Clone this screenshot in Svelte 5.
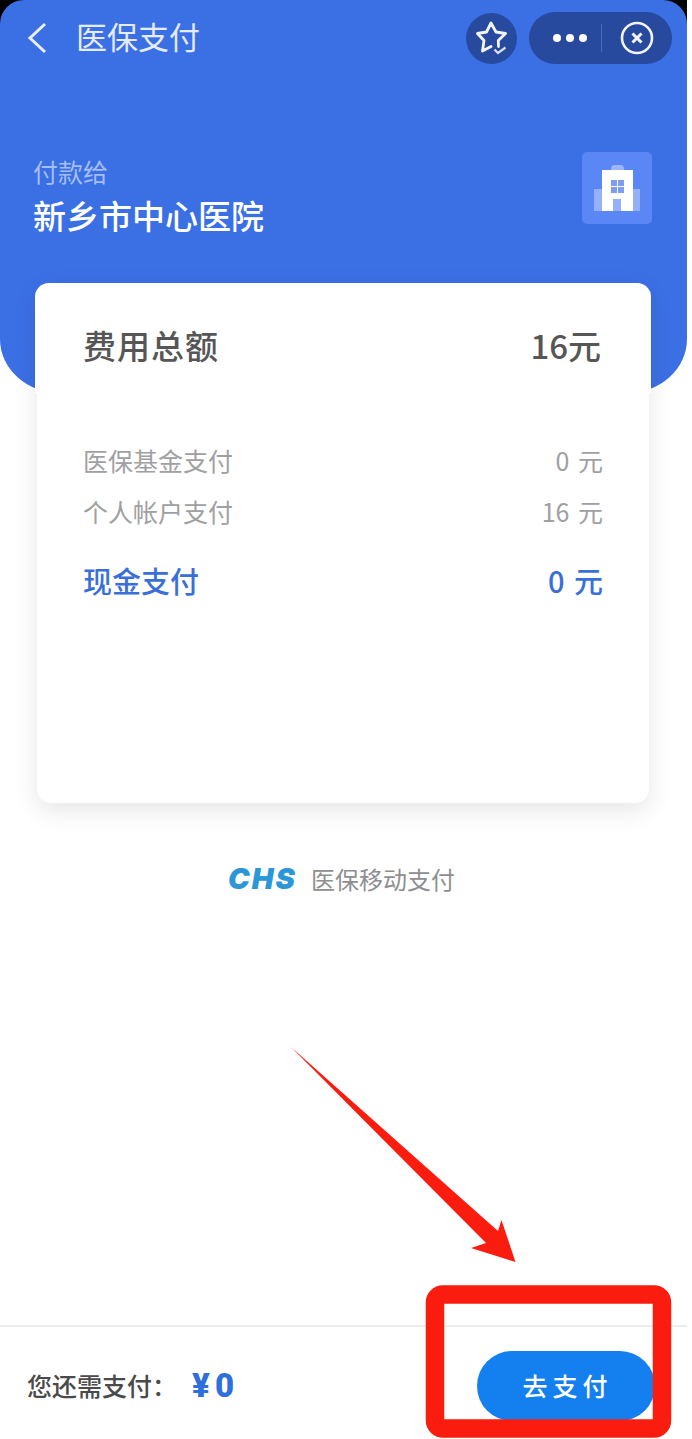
<script>
    // 费用明细
    const details = [
        { label: '医保基金支付', value: '0 元' },
        { label: '个人帐户支付', value: '16 元' }
    ];
</script>

<div class="page">
    <div class="top">
        <header class="header">
            <div class="nav">
                <svg class="back" width="20" height="32" viewBox="0 0 20 32">
                    <path d="M18 2 L3 16 L18 30" fill="none" stroke="#e8eefc" stroke-width="3" />
                </svg>
                <span class="title">医保支付</span>
                <span class="star-btn">
                    <svg width="32" height="34" viewBox="0 0 32 34">
                        <path d="M22.5 25.5 L22.3 19.5 L29.5 12.5 L20 11 L15 2 L10.5 11 L1.5 12.5 L8 19.5 L6.5 30 L15 25.5" fill="none" stroke="#f2f5fd" stroke-width="2.8" stroke-linejoin="round" stroke-linecap="round" />
                        <path d="M18.5 28.5 L22 32 L29.5 26.5" fill="none" stroke="#d5dff6" stroke-width="2.2" />
                    </svg>
                </span>
                <div class="capsule">
                    <span class="dots"><i></i><i></i><i></i></span>
                    <span class="divider"></span>
                    <svg width="34" height="34" viewBox="0 0 34 34">
                        <circle cx="17" cy="17" r="15" fill="none" stroke="#f2f5fd" stroke-width="2.6" />
                        <path d="M12.5 12.5 L21.5 21.5 M21.5 12.5 L12.5 21.5" stroke="#f2f5fd" stroke-width="3" />
                    </svg>
                </div>
            </div>
            <div class="payee">
                <div class="payee-text">
                    <div class="payee-label">付款给</div>
                    <div class="payee-name">新乡市中心医院</div>
                </div>
                <span class="tile">
                    <svg width="46" height="46" viewBox="0 0 46 46">
                        <rect x="0" y="24" width="46" height="22" fill="#fff" opacity="0.35" />
                        <rect x="17" y="0" width="13" height="10" rx="4" fill="#fff" opacity="0.4" />
                        <path d="M8 5 H39 V46 H27 V34 H19 V46 H8 Z" fill="#fff" />
                        <g fill="#7d9df0">
                            <rect x="17" y="15" width="6" height="6" />
                            <rect x="24" y="15" width="6" height="6" />
                            <rect x="17" y="22" width="6" height="6" />
                            <rect x="24" y="22" width="6" height="6" />
                        </g>
                    </svg>
                </span>
            </div>
        </header>
    </div>

    <section class="card">
        <div class="row total">
            <span>费用总额</span>
            <span class="total-value">16元</span>
        </div>
        <div class="details">
            {#each details as item}
                <div class="row detail">
                    <span>{item.label}</span>
                    <span class="spaced">{item.value}</span>
                </div>
            {/each}
        </div>
        <div class="row cash">
            <span>现金支付</span>
            <span class="spaced">0 元</span>
        </div>
    </section>

    <div class="brand">
        <span class="chs">CHS</span>
        <span class="brand-text">医保移动支付</span>
    </div>

    <footer class="footer">
        <span class="due">您还需支付：</span>
        <span class="amount"><span class="yen">¥</span>0</span>
        <button class="pay">去支付</button>
    </footer>

    <!-- 红色标注 -->
    <svg class="markup" width="692" height="1439" viewBox="0 0 692 1439">
        <polygon points="291,1047 498,1231 501.5,1220 515.5,1262 471,1248 486,1243" fill="#fb1c10" />
        <rect x="435" y="1294.5" width="227" height="134" rx="8" fill="none" stroke="#fb1c10" stroke-width="18.5" />
    </svg>
</div>

<style>
    :global(body) {
        background: #fff;
    }
    .page {
        position: relative;
        width: 687px;
        height: 1439px;
        display: flex;
        flex-direction: column;
        font-family: "Noto Sans CJK SC", "Noto Sans", sans-serif;
    }
    .top {
        background: linear-gradient(#000 30px, transparent 30px);
    }
    .header {
        height: 393px;
        box-sizing: border-box;
        padding-top: 12px;
        background: #3b6fe4;
        border-radius: 24px 24px 60px 60px / 24px 24px 54px 54px;
        color: #fff;
    }
    .nav {
        display: flex;
        align-items: center;
        height: 52px;
        padding-left: 27px;
    }
    .back {
        margin-right: 29px;
    }
    .title {
        padding-bottom: 5px;
        font-size: 31px;
        line-height: 47px;
        color: #e4ebfa;
    }
    .star-btn {
        display: flex;
        align-items: center;
        justify-content: center;
        width: 51px;
        height: 51px;
        margin-left: auto;
        border-radius: 50%;
        background: #274a9f;
    }
    .capsule {
        display: flex;
        align-items: center;
        width: 143px;
        height: 52px;
        box-sizing: border-box;
        margin: 0 15px 0 12px;
        padding-left: 24px;
        border-radius: 26px;
        background: #274a9f;
    }
    .dots {
        display: flex;
        gap: 5px;
    }
    .dots i {
        width: 8px;
        height: 8px;
        border-radius: 50%;
        background: #fff;
    }
    .divider {
        width: 1px;
        height: 28px;
        margin: 0 18px 0 14px;
        background: #4a6cb8;
    }
    .payee {
        display: flex;
        align-items: flex-start;
        justify-content: space-between;
        margin-top: 88px;
        padding: 0 35px 0 33px;
    }
    .payee-text {
        padding-top: 1px;
    }
    .payee-label {
        font-size: 25px;
        line-height: 36px;
        color: #a5bdf2;
    }
    .payee-name {
        margin-top: 3px;
        font-size: 33px;
        line-height: 46px;
        font-weight: 500;
    }
    .tile {
        display: flex;
        align-items: center;
        justify-content: center;
        width: 70px;
        height: 72px;
        border-radius: 5px;
        background: #5b86f5;
    }
    .card {
        position: relative;
        width: 612px;
        height: 520px;
        box-sizing: border-box;
        margin: -110px 0 0 37px;
        padding: 42px 48px 0 46px;
        border-radius: 14px;
        background: #fff;
        box-shadow: 0 8px 24px rgba(0, 0, 0, 0.1);
    }
    /* 截图被拉伸过，卡片上半部略宽 */
    .card::before {
        content: "";
        position: absolute;
        top: 0;
        left: -2px;
        right: -2px;
        height: 110px;
        border-radius: 14px 14px 0 0;
        background: #fff;
    }
    .row {
        position: relative;
        display: flex;
        justify-content: space-between;
    }
    .total {
        font-size: 33px;
        line-height: 40px;
        font-weight: 500;
        letter-spacing: 1px;
        color: #565656;
    }
    .total-value {
        letter-spacing: 0;
    }
    .details {
        display: flex;
        flex-direction: column;
        gap: 15px;
        margin-top: 77px;
    }
    .detail {
        font-size: 25px;
        line-height: 36px;
        color: #a0a0a2;
    }
    .spaced {
        margin-right: -2px;
        word-spacing: 3px;
    }
    .cash {
        margin-top: 31px;
        font-size: 29px;
        line-height: 40px;
        font-weight: 500;
        color: #3b6fd8;
    }
    .brand {
        display: flex;
        align-items: center;
        margin: 56px 0 0 228px;
    }
    .chs {
        width: 83px;
        font-family: "Inter", sans-serif;
        font-size: 29px;
        line-height: 40px;
        font-weight: 900;
        font-style: italic;
        letter-spacing: 2px;
        color: #2b97d6;
    }
    .brand-text {
        font-size: 24px;
        line-height: 40px;
        color: #8e8e90;
    }
    .footer {
        display: flex;
        align-items: flex-start;
        margin-top: auto;
        height: 114px;
        box-sizing: border-box;
        padding: 24px 32px 0 27px;
        border-top: 2px solid #ececec;
    }
    .due {
        font-size: 25px;
        line-height: 68px;
        font-weight: 500;
        color: #4a4a4a;
    }
    .amount {
        margin-left: 15px;
        font-family: "Roboto", sans-serif;
        font-size: 33px;
        line-height: 70px;
        font-weight: 900;
        color: #2f6fdc;
    }
    .yen {
        margin-right: 5px;
    }
    .pay {
        width: 178px;
        height: 70px;
        margin-left: auto;
        padding: 0 0 3px 3px;
        border: 0;
        border-radius: 35px;
        background: #1480f0;
        color: #fff;
        font: 500 25px "Noto Sans CJK SC", sans-serif;
        letter-spacing: 5px;
    }
    .markup {
        position: absolute;
        top: 0;
        left: 0;
        pointer-events: none;
    }
</style>
